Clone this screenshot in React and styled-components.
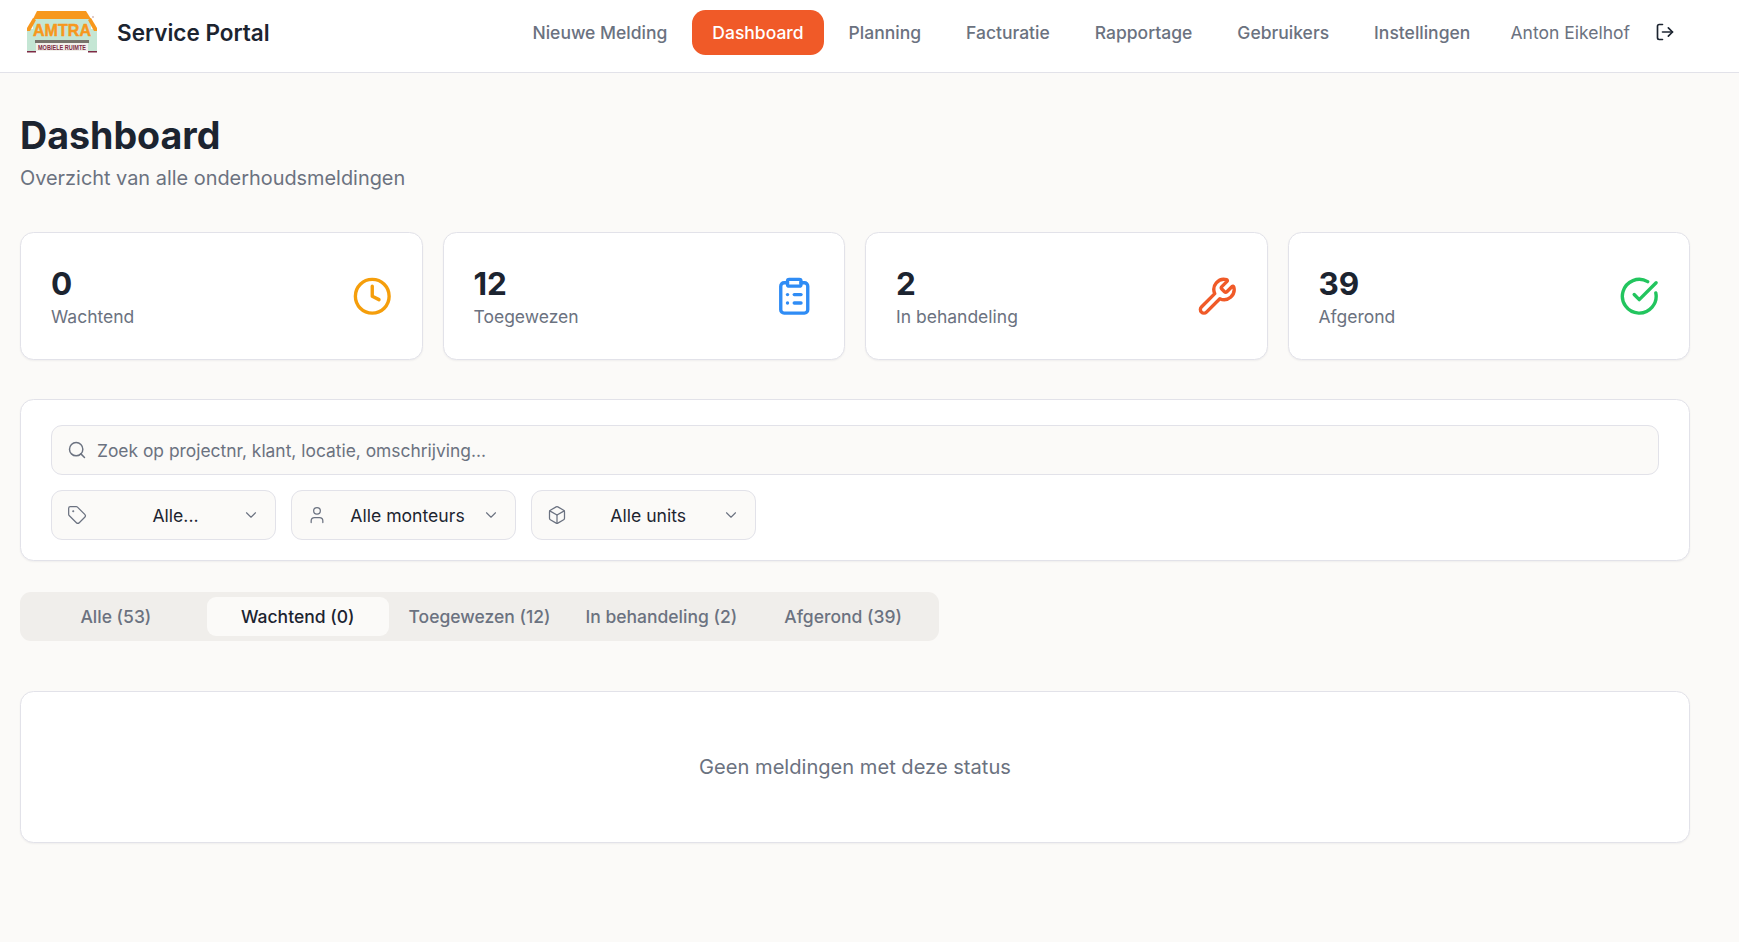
import styled, { createGlobalStyle } from "styled-components";
import { Box, ChevronDown, CircleCheckBig, ClipboardList, Clock, LogOut, Search, Tag, User, Wrench } from "lucide-react";

const GlobalStyle = createGlobalStyle`
  html, body { margin: 0; padding: 0; }
  body {
    background: #fbfaf8;
    color: #1c2430;
    font-family: Inter, "Liberation Sans", sans-serif;
    min-height: 942px;
  }
  * { box-sizing: border-box; }
`;

const Header = styled.header`
  height: 73px;
  background: #fff;
  border-bottom: 1px solid #e2e2e9;
  display: flex;
  align-items: center;
  padding: 0 64px 8px 26px;
`;
const Brand = styled.div`
  display: flex;
  align-items: center;
  gap: 19px;
  font-size: 22.5px;
  font-weight: 600;
  color: #1c2430;
`;
const Nav = styled.nav`
  margin-left: auto;
  display: flex;
  align-items: center;
  gap: 4.5px;
`;
const NavLink = styled.a`
  height: 45px;
  display: flex;
  align-items: center;
  padding: 0 20.25px;
  border-radius: 13.5px;
  font-size: 17.5px;
  font-weight: 500;
  color: ${p => (p.$active ? "#fff" : "#6b7280")};
  background: ${p => (p.$active ? "#f05a28" : "transparent")};
`;
const UserName = styled.span`
  font-size: 17.5px;
  color: #6b7280;
  margin-left: 15.5px;
`;
const LogoutButton = styled.button`
  border: 0;
  background: none;
  padding: 0;
  margin-left: 20.5px;
  display: flex;
  color: #1c2430;
`;
const Main = styled.main`
  padding: 36px 49px 0 20px;
`;
const Title = styled.h1`
  margin: 0;
  font-size: 37.6px;
  line-height: 54px;
  font-weight: 700;
  color: #1c2430;
`;
const Subtitle = styled.p`
  margin: 1px 0 0;
  font-size: 19.9px;
  line-height: 28px;
  color: #6b7280;
`;
const Stats = styled.section`
  margin-top: 40px;
  display: grid;
  grid-template-columns: repeat(4, 1fr);
  gap: 20px;
`;
const Card = styled.div`
  background: #fff;
  border: 1px solid #e2e2e9;
  border-radius: 13.5px;
  box-shadow: 0 1px 2px rgba(20, 24, 40, 0.05);
`;
const StatCard = styled(Card)`
  height: 128px;
  padding: 1px 29.5px 0 30px;
  display: flex;
  align-items: center;
  justify-content: space-between;
`;
const StatValue = styled.div`
  font-size: 31.5px;
  line-height: 40px;
  font-weight: 700;
  color: #1c2430;
`;
const StatLabel = styled.div`
  font-size: 17.5px;
  line-height: 26px;
  color: #6b7280;
`;
const FilterCard = styled(Card)`
  margin-top: 39px;
  height: 162px;
  padding: 25px 30px 0;
`;
const SearchBox = styled.div`
  height: 50px;
  border: 1px solid #e2e2e9;
  border-radius: 11px;
  background: #fbfaf8;
  display: flex;
  align-items: center;
  gap: 8px;
  padding: 0 15px;
  color: #6b7280;
`;
const SearchInput = styled.input`
  flex: 1;
  border: 0;
  outline: 0;
  background: none;
  font: inherit;
  font-size: 17.4px;
  color: #1c2430;
  &::placeholder { color: #6b7280; opacity: 1; }
`;
const FilterRow = styled.div`
  margin-top: 15px;
  display: flex;
  gap: 15px;
`;
const SelectButton = styled.button`
  width: 225px;
  height: 50px;
  border: 1px solid #e2e2e9;
  border-radius: 11px;
  background: #fbfaf8;
  display: flex;
  align-items: center;
  padding: 0 15px;
  color: #6b7280;
  font-family: inherit;
`;
const SelectText = styled.span`
  flex: 1;
  text-align: center;
  font-size: 17.6px;
  color: #1c2430;
  padding-left: ${p => p.$shift}px;
`;
const Tabs = styled.div`
  margin-top: 31px;
  width: 919px;
  height: 49px;
  padding: 5px;
  background: #f0eeeb;
  border-radius: 11px;
  display: grid;
  grid-template-columns: repeat(5, 1fr);
`;
const TabItem = styled.button`
  border: 0;
  border-radius: 9px;
  font-family: inherit;
  font-size: 17.5px;
  font-weight: 500;
  padding: 0;
  color: ${p => (p.$active ? "#1c2430" : "#6b7280")};
  background: ${p => (p.$active ? "#fbfaf8" : "transparent")};
`;
const EmptyCard = styled(Card)`
  margin-top: 50px;
  height: 152px;
  display: flex;
  align-items: center;
  justify-content: center;
  font-size: 20.1px;
  color: #6b7280;
`;

function Logo() {
  return (
    <svg width="72" height="42" viewBox="0 0 72 42">
      <rect x="7" y="7" width="58" height="12" fill="#c4e6d4" />
      <rect x="1" y="18" width="70" height="22" fill="#c4e6d4" />
      <path d="M7 8 L11 0 H60 L65 8 Z" fill="#f7981d" />
      <path d="M7 7 L1 17 V20 H4 L10 9 Z" fill="#f7981d" />
      <path d="M65 7 L71 17 V20 H68 L62 9 Z" fill="#f7981d" />
      <text x="36" y="25" textAnchor="middle" fontFamily="Liberation Sans" fontWeight="700" fontSize="17" textLength="58" lengthAdjust="spacingAndGlyphs" fill="#f7981d" stroke="#f7981d" strokeWidth="0.5">AMTRA</text>
      <rect x="9" y="29" width="54" height="3" fill="#77736b" />
      <rect x="10" y="32" width="52" height="8" fill="#f1efea" />
      <rect x="1" y="40" width="9" height="1.5" fill="#7d2a45" />
      <rect x="62" y="40" width="9" height="1.5" fill="#7d2a45" />
      <text x="36" y="39" textAnchor="middle" fontFamily="Liberation Sans" fontSize="6.5" textLength="48" lengthAdjust="spacingAndGlyphs" fill="#7d2a45">MOBIELE RUIMTE</text>
      <circle cx="67" cy="6" r="0.8" fill="#b98a8a" />
    </svg>
  );
}

const stats = [
  { value: "0", label: "Wachtend", Icon: Clock, color: "#f59e0b" },
  { value: "12", label: "Toegewezen", Icon: ClipboardList, color: "#2f8cf5" },
  { value: "2", label: "In behandeling", Icon: Wrench, color: "#f05a28" },
  { value: "39", label: "Afgerond", Icon: CircleCheckBig, color: "#22c55e" },
];
const links = ["Nieuwe Melding", "Dashboard", "Planning", "Facturatie", "Rapportage", "Gebruikers", "Instellingen"];
const filters = [
  { text: "Alle...", Icon: Tag, shift: 22 },
  { text: "Alle monteurs", Icon: User, shift: 6 },
  { text: "Alle units", Icon: Box, shift: 7.5 },
];
const tabs = ["Alle (53)", "Wachtend (0)", "Toegewezen (12)", "In behandeling (2)", "Afgerond (39)"];

export default function App() {
  return (
    <>
      <GlobalStyle />
      <Header>
        <Brand>
          <Logo />
          Service Portal
        </Brand>
        <Nav>
          {links.map(l => (
            <NavLink key={l} $active={l === "Dashboard"}>{l}</NavLink>
          ))}
          <UserName>Anton Eikelhof</UserName>
          <LogoutButton><LogOut size={20} /></LogoutButton>
        </Nav>
      </Header>
      <Main>
        <Title>Dashboard</Title>
        <Subtitle>Overzicht van alle onderhoudsmeldingen</Subtitle>
        <Stats>
          {stats.map(s => (
            <StatCard key={s.label}>
              <div>
                <StatValue>{s.value}</StatValue>
                <StatLabel>{s.label}</StatLabel>
              </div>
              <s.Icon size={40.5} color={s.color} />
            </StatCard>
          ))}
        </Stats>
        <FilterCard>
          <SearchBox>
            <Search size={20} strokeWidth={1.75} />
            <SearchInput placeholder="Zoek op projectnr, klant, locatie, omschrijving..." />
          </SearchBox>
          <FilterRow>
            {filters.map(f => (
              <SelectButton key={f.text}>
                <f.Icon size={20} strokeWidth={1.5} />
                <SelectText $shift={f.shift}>{f.text}</SelectText>
                <ChevronDown size={18} strokeWidth={1.5} />
              </SelectButton>
            ))}
          </FilterRow>
        </FilterCard>
        <Tabs>
          {tabs.map(t => (
            <TabItem key={t} $active={t.startsWith("Wachtend")}>{t}</TabItem>
          ))}
        </Tabs>
        <EmptyCard>Geen meldingen met deze status</EmptyCard>
      </Main>
    </>
  );
}
